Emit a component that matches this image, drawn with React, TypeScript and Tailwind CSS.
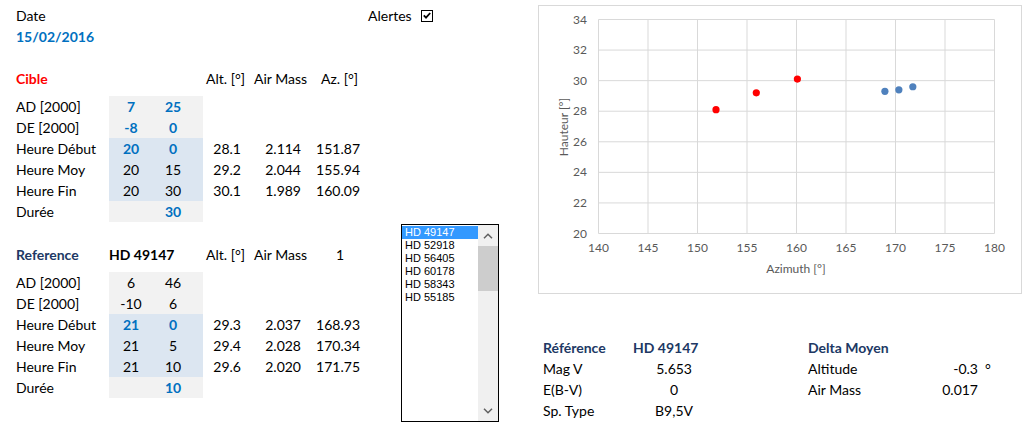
import React from 'react';

type Row = {
  label: string;
  a: string;
  b: string;
  boldA?: boolean;
  boldB?: boolean;
  alt?: string;
  am?: string;
  az?: string;
  blue?: boolean;
};

const cible: Row[] = [
  { label: 'AD [2000]', a: '7', b: '25', boldA: true, boldB: true },
  { label: 'DE [2000]', a: '-8', b: '0', boldA: true, boldB: true },
  { label: 'Heure Début', a: '20', b: '0', boldA: true, boldB: true, alt: '28.1', am: '2.114', az: '151.87', blue: true },
  { label: 'Heure Moy', a: '20', b: '15', alt: '29.2', am: '2.044', az: '155.94', blue: true },
  { label: 'Heure Fin', a: '20', b: '30', alt: '30.1', am: '1.989', az: '160.09', blue: true },
  { label: 'Durée', a: '', b: '30', boldB: true },
];

const reference: Row[] = [
  { label: 'AD [2000]', a: '6', b: '46' },
  { label: 'DE [2000]', a: '-10', b: '6' },
  { label: 'Heure Début', a: '21', b: '0', boldA: true, boldB: true, alt: '29.3', am: '2.037', az: '168.93', blue: true },
  { label: 'Heure Moy', a: '21', b: '5', alt: '29.4', am: '2.028', az: '170.34', blue: true },
  { label: 'Heure Fin', a: '21', b: '10', alt: '29.6', am: '2.020', az: '171.75', blue: true },
  { label: 'Durée', a: '', b: '10', boldB: true },
];

const stars = ['HD 49147', 'HD 52918', 'HD 56405', 'HD 60178', 'HD 58343', 'HD 55185'];

function SheetRow({ r }: { r: Row }) {
  return (
    <div className="flex h-[21px] items-center">
      <div className="w-[93px] whitespace-nowrap">{r.label}</div>
      <div className={`flex h-full w-[94px] items-center ${r.blue ? 'bg-[#dce6f1]' : 'bg-[#f2f2f2]'}`}>
        <div className={`w-[44px] text-center ${r.boldA ? 'font-bold text-[#0070c0]' : ''}`}>{r.a}</div>
        <div className={`w-[40px] text-center ${r.boldB ? 'font-bold text-[#0070c0]' : ''}`}>{r.b}</div>
      </div>
      <div className="w-[42px] pr-[4px] text-right">{r.alt}</div>
      <div className="w-[60px] pr-[4px] text-right">{r.am}</div>
      <div className="w-[59px] pr-[4px] text-right">{r.az}</div>
    </div>
  );
}

function Chart() {
  const x0 = 59.5;
  const x1 = 455.5;
  const y0 = 13.5;
  const y1 = 227.5;
  const px = (az: number) => x0 + ((az - 140) / 40) * (x1 - x0);
  const py = (alt: number) => y1 - ((alt - 20) / 14) * (y1 - y0);
  const xs = [140, 145, 150, 155, 160, 165, 170, 175, 180];
  const ys = [20, 22, 24, 26, 28, 30, 32, 34];
  const red = [
    [151.87, 28.1],
    [155.94, 29.2],
    [160.09, 30.1],
  ];
  const blue = [
    [168.93, 29.3],
    [170.34, 29.4],
    [171.75, 29.6],
  ];
  return (
    <svg width="482" height="287" viewBox="0 0 482 287" className="block">
      {xs.map((v) => (
        <line key={'x' + v} x1={px(v)} x2={px(v)} y1={y0} y2={y1} stroke="#d9d9d9" strokeWidth="1" />
      ))}
      {ys.map((v) => (
        <line key={'y' + v} x1={x0} x2={x1} y1={py(v)} y2={py(v)} stroke="#d9d9d9" strokeWidth="1" />
      ))}
      <g fill="#595959" fontSize="12" fontFamily="Lato, 'Liberation Sans', sans-serif">
        {ys.map((v) => (
          <text key={'ly' + v} x="48" y={py(v) + 4} textAnchor="end">
            {v}
          </text>
        ))}
        {xs.map((v) => (
          <text key={'lx' + v} x={px(v)} y="246" textAnchor="middle">
            {v}
          </text>
        ))}
        <text x="257" y="267" textAnchor="middle">
          Azimuth [°]
        </text>
        <text x="29" y="121" textAnchor="middle" transform="rotate(-90 29 121)">
          Hauteur [°]
        </text>
      </g>
      {red.map(([a, h]) => (
        <circle key={'r' + a} cx={px(a)} cy={py(h)} r="3.6" fill="#ff0000" />
      ))}
      {blue.map(([a, h]) => (
        <circle key={'b' + a} cx={px(a)} cy={py(h)} r="3.6" fill="#4f81bd" />
      ))}
    </svg>
  );
}

function Chevron({ up }: { up?: boolean }) {
  return (
    <svg width="10" height="6" viewBox="0 0 10 6">
      <path d={up ? 'M1 5.2 L5 1.2 L9 5.2' : 'M1 0.8 L5 4.8 L9 0.8'} fill="none" stroke="#606060" strokeWidth="1.5" />
    </svg>
  );
}

export default function App() {
  return (
    <div className="flex h-[435px] w-[1032px] overflow-hidden bg-white text-[14px] text-black font-[Lato,'Liberation_Sans',sans-serif]">
      {/* sheet */}
      <div className="w-[364px] pl-[16px] pt-[5px]">
        <div className="flex h-[21px] items-center">Date</div>
        <div className="flex h-[21px] items-center font-bold text-[#0070c0]">15/02/2016</div>
        <div className="h-[21px]" />
        <div className="flex h-[21px] items-center">
          <div className="w-[187px] font-bold text-[#ff0000]">Cible</div>
          <div className="w-[42px] pl-[3px] whitespace-nowrap">Alt. [°]</div>
          <div className="w-[60px] pl-[9px] whitespace-nowrap">Air Mass</div>
          <div className="w-[59px] pl-[16px] whitespace-nowrap">Az. [°]</div>
        </div>
        <div className="h-[7px]" />
        {cible.map((r) => (
          <SheetRow key={r.label} r={r} />
        ))}
        <div className="h-[22px]" />
        <div className="flex h-[21px] items-center">
          <div className="w-[93px] font-bold text-[#203864]">Reference</div>
          <div className="w-[94px] whitespace-nowrap font-bold">HD 49147</div>
          <div className="w-[42px] pl-[3px] whitespace-nowrap">Alt. [°]</div>
          <div className="w-[60px] pl-[9px] whitespace-nowrap">Air Mass</div>
          <div className="w-[59px] pl-[31px]">1</div>
        </div>
        <div className="h-[7px]" />
        {reference.map((r) => (
          <SheetRow key={r.label} r={r} />
        ))}
      </div>

      {/* alerts + list */}
      <div className="w-[174px] pt-[5px]">
        <div className="flex h-[21px] items-center pl-[4px]">
          <span>Alertes</span>
          <span className="ml-[9px] flex h-[12px] w-[12px] items-center justify-center border border-black">
            <svg width="8" height="7" viewBox="0 0 8 7">
              <path d="M0.8 3.4 L3 5.6 L7.2 1" fill="none" stroke="#000" strokeWidth="1.8" />
            </svg>
          </span>
        </div>
        <div className="ml-[37px] mt-[198px] flex h-[198px] w-[98px] border border-black bg-white font-['Liberation_Sans',Arial,sans-serif] text-[11px]">
          <div className="flex-1 pt-[1px]">
            {stars.map((s, i) => (
              <div key={s} className={`h-[13px] whitespace-nowrap pl-[3px] leading-[13px] ${i === 0 ? 'bg-[#3399ff] text-white' : 'text-black'}`}>
                {s}
              </div>
            ))}
          </div>
          <div className="flex w-[20px] flex-col bg-[#f0f0f0]">
            <div className="flex h-[21px] items-center justify-center">
              <Chevron up />
            </div>
            <div className="h-[45px] bg-[#cdcdcd]" />
            <div className="flex-1" />
            <div className="flex h-[21px] items-center justify-center">
              <Chevron />
            </div>
          </div>
        </div>
      </div>

      {/* chart + info */}
      <div className="w-[494px] pt-[5px]">
        <div className="h-[289px] w-[484px] border border-[#d9d9d9]">
          <Chart />
        </div>
        <div className="mt-[43px] flex pl-[5px]">
          <div>
            <div className="flex h-[21px] items-center whitespace-nowrap font-bold text-[#203864]">
              <div className="w-[90px]">Référence</div>
              <div className="w-[64px]">HD 49147</div>
            </div>
            <div className="flex h-[21px] items-center">
              <div className="w-[90px]">Mag V</div>
              <div className="w-[64px] pr-[5px] text-right">5.653</div>
            </div>
            <div className="flex h-[21px] items-center">
              <div className="w-[90px]">E(B-V)</div>
              <div className="w-[64px] pr-[19px] text-right">0</div>
            </div>
            <div className="flex h-[21px] items-center">
              <div className="w-[90px]">Sp. Type</div>
              <div className="w-[64px] pr-[4px] text-right">B9,5V</div>
            </div>
          </div>
          <div className="ml-[111px]">
            <div className="flex h-[21px] items-center whitespace-nowrap font-bold text-[#203864]">Delta Moyen</div>
            <div className="flex h-[21px] items-center">
              <div className="w-[100px]">Altitude</div>
              <div className="w-[70px] text-right">-0.3</div>
              <div className="pl-[7px]">°</div>
            </div>
            <div className="flex h-[21px] items-center">
              <div className="w-[100px]">Air Mass</div>
              <div className="w-[70px] text-right">0.017</div>
            </div>
          </div>
        </div>
      </div>
    </div>
  );
}
